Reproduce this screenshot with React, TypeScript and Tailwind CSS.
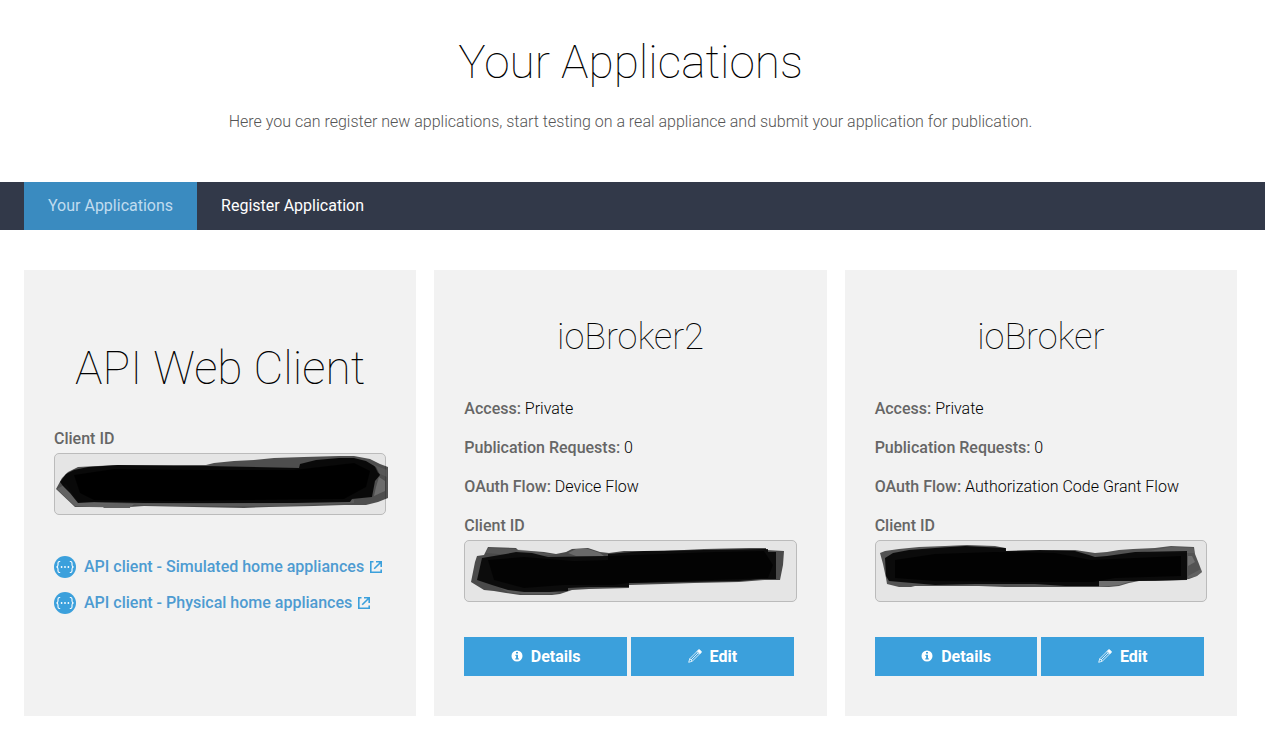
import type { ReactNode } from "react";

type Stroke = { points: string; fill: string; opacity: number };

const webClientMark: Stroke[] = [
  { points: "2,36 8,25 14,19 24,14 64,12 120,12 152,12 160,10 180,8 200,7 220,5 250,4 285,3 300,3 316,6 326,11 334,14 334,45 324,49 312,52 290,52 260,53 215,54 190,55 90,53 76,54 76,55 50,55 49,54 21,54", fill: "#000", opacity: 0.66 },
  { points: "3,36 12,31 24,49 80,51 76,55 50,55 21,53", fill: "#8a8a8a", opacity: 0.35 },
  { points: "30,50 150,51 230,50 300,47 300,50 230,53 120,53", fill: "#777", opacity: 0.3 },
  { points: "6,29 12,21 20,17 34,14 64,12 120,13 152,13 245,15 246,11 262,7 285,5 300,5 312,8 322,14 326,22 321,28 318,44 298,46 296,49 240,50 200,50 130,50 90,50 40,49 24,50 16,40 9,33", fill: "#000", opacity: 0.88 },
  { points: "20,22 60,16 150,17 240,17 300,10 316,18 312,34 290,46 120,48 40,47 26,40", fill: "#000", opacity: 0.9 },
  { points: "322,34 325,24 331,28 331,38 320,43", fill: "#8a8a8a", opacity: 0.5 },
  { points: "320,12 333,17 333,24 324,20", fill: "#666", opacity: 0.45 },
];

const deviceMark: Stroke[] = [
  { points: "7,42 11,22 13,16 20,15 24,7 52,8 54,10 80,12 92,14 102,12 108,9 124,8 136,12 145,13 160,11 200,11 240,9 285,8 302,8 302,10 320,11 319,25 316,40 300,40 275,42 230,43 200,44 165,45 165,48 125,49 108,50 96,54 88,55 56,55 42,53 30,51 20,50", fill: "#000", opacity: 0.68 },
  { points: "24,8 52,9 80,13 92,15 60,16 22,13", fill: "#777", opacity: 0.25 },
  { points: "104,13 112,9 124,9 136,13 140,16 112,16", fill: "#999", opacity: 0.4 },
  { points: "36,48 60,51 100,50 90,54 58,54 44,52", fill: "#777", opacity: 0.3 },
  { points: "13,40 18,18 36,15 52,12 68,13 84,17 144,16 144,14 180,11 240,10 304,9 304,12 312,12 312,39 297,39 275,41 220,42 165,43 165,47 125,47 104,48 104,51 86,52 60,52 44,50 28,45", fill: "#000", opacity: 0.84 },
  { points: "24,20 60,17 110,21 144,20 144,16 250,12 300,11 309,25 304,38 220,41 164,43 150,45 100,45 60,48 30,40", fill: "#000", opacity: 0.7 },
];

const brokerMark: Stroke[] = [
  { points: "5,13 10,11 24,9 44,7 70,6 92,5 120,6 130,8 131,11 180,10 200,10 220,13 232,12 244,10 258,9 280,8 296,6 319,7 320,14 324,24 327,32 322,36 314,39 306,40 280,41 264,41 254,43 244,46 234,47 224,47 130,47 104,46 40,46 36,47 24,47 12,44 11,38 8,24", fill: "#000", opacity: 0.64 },
  { points: "224,41 260,40 244,45 224,47", fill: "#999", opacity: 0.4 },
  { points: "296,7 318,8 320,13 294,13 258,14", fill: "#777", opacity: 0.3 },
  { points: "10,18 18,13 34,10 60,8 90,6 131,8 131,11 165,10 200,11 214,15 220,17 232,16 260,12 312,11 312,40 260,41 224,41 224,46 190,46 160,44 100,44 60,45 14,41 11,36", fill: "#000", opacity: 0.86 },
  { points: "20,20 60,14 120,12 180,13 216,20 260,18 306,16 306,36 240,38 218,42 150,42 60,41 20,38", fill: "#000", opacity: 0.8 },
  { points: "313,16 317,16 320,22 313,26", fill: "#888", opacity: 0.55 },
  { points: "313,36 326,29 327,32 322,36 313,38", fill: "#777", opacity: 0.4 },
];

function ClientId({ id, strokes }: { id: string; strokes: Stroke[] }) {
  return (
    <div>
      <label htmlFor={id} className="block h-6 font-medium text-[#666]">
        Client ID
      </label>
      <div className="relative mt-[2px]">
        <textarea
          id={id}
          readOnly
          className="block h-[62px] w-full resize-none rounded-[5px] border border-[#bbb] bg-[#e5e5e5] p-2"
        />
        <svg
          aria-hidden="true"
          viewBox="0 0 334 62"
          className="pointer-events-none absolute top-0 left-0 h-[62px] w-[334px]"
        >
          {strokes.map((s) => (
            <polygon key={s.points} points={s.points} fill={s.fill} opacity={s.opacity} />
          ))}
        </svg>
      </div>
    </div>
  );
}

function ApiIcon() {
  return (
    <svg aria-hidden="true" viewBox="0 0 22 22" className="h-[22px] w-[22px] shrink-0">
      <circle cx="11" cy="11" r="11" fill="#3ba0dc" />
      <g fill="none" stroke="#fff" strokeWidth="1.1">
        <path d="M6.2 5.5h-.6c-1.2 0-1.6.6-1.6 1.6v2c0 1.1-.6 1.9-1.7 1.9 1.1 0 1.7.8 1.7 1.9v2c0 1 .4 1.6 1.6 1.6h.6" />
        <path d="M15.8 5.5h.6c1.2 0 1.6.6 1.6 1.6v2c0 1.1.6 1.9 1.7 1.9-1.1 0-1.7.8-1.7 1.9v2c0 1-.4 1.6-1.6 1.6h-.6" />
      </g>
      <g fill="#fff">
        <circle cx="7.6" cy="11" r="0.9" />
        <circle cx="11" cy="11" r="0.9" />
        <circle cx="14.4" cy="11" r="0.9" />
      </g>
    </svg>
  );
}

function ExternalIcon() {
  return (
    <svg aria-hidden="true" viewBox="0 0 12 12" className="ml-[6px] h-3 w-3 shrink-0" fill="none" stroke="#3ba0dc">
      <path d="M3.5.8H.8v10.4h10.4V8.5" strokeWidth="1.6" />
      <path d="M6 .8h5.2V6M11 1 4.2 7.8" strokeWidth="1.6" />
    </svg>
  );
}

function InfoIcon() {
  return (
    <svg aria-hidden="true" viewBox="0 0 12 12" className="-mt-px h-3 w-3">
      <circle cx="6" cy="6" r="5.5" fill="#fff" />
      <path d="M5 2h2v1.6H5zM4.4 4.8H7v3.4h.8v1.2H4.3V8.2h.8V6h-.7z" fill="#3ba0dc" />
    </svg>
  );
}

function PencilIcon() {
  return (
    <svg aria-hidden="true" viewBox="0 0 14 14" className="-mt-px h-[14px] w-[14px]" fill="none" stroke="#fff" strokeWidth="0.8">
      <path d="M.7 13.3l1.1-3.6L10.3 1.2c.5-.5 1-.5 1.5 0l1 1c.5.5.5 1 0 1.5L4.3 12.2z" />
      <path d="M1.8 9.7l2.5 2.5M9 2.5 11.5 5M10 4 3 11" />
      <path d="M10.3 1.2c.5-.5 1-.5 1.5 0l1 1c.5.5.5 1 0 1.5l-.8.8-2.5-2.5z" fill="#fff" />
    </svg>
  );
}

function ApiLink({ children }: { children: ReactNode }) {
  return (
    <a href="#client" className="flex h-6 items-center font-medium text-[#4d9bd1]">
      <ApiIcon />
      <span className="ml-2">{children}</span>
      <ExternalIcon />
    </a>
  );
}

function Action({ icon, children }: { icon: ReactNode; children: ReactNode }) {
  return (
    <button
      type="button"
      className="flex h-[39px] flex-1 items-center justify-center gap-2 bg-[#3ba0dc] font-bold text-white"
    >
      {icon}
      {children}
    </button>
  );
}

function Fact({ name, value }: { name: string; value: string }) {
  return (
    <p>
      <strong className="font-medium text-[#666]">{name}:</strong> {value}
    </p>
  );
}

function AppCard({ name, flow, strokes }: { name: string; flow: string; strokes: Stroke[] }) {
  return (
    <section className="bg-[#f2f2f2] px-[30px] pt-10 pb-10">
      <h2 className="text-center text-4xl leading-[54px] font-thin">{name}</h2>
      <div className="mt-[33px] flex flex-col gap-[15px]">
        <Fact name="Access" value="Private" />
        <Fact name="Publication Requests" value="0" />
        <Fact name="OAuth Flow" value={flow} />
        <ClientId id={"client-" + name} strokes={strokes} />
      </div>
      <div className="mt-[35px] flex gap-1 pr-[3px]">
        <Action icon={<InfoIcon />}>Details</Action>
        <Action icon={<PencilIcon />}>Edit</Action>
      </div>
    </section>
  );
}

export default function App() {
  return (
    <div className="bg-white font-[Roboto,sans-serif] text-base leading-6 font-light text-black">
      <header className="pt-8 pr-7 pb-12 pl-6 text-center">
        <h1 className="text-[46px] leading-[60px] font-thin">Your Applications</h1>
        <p className="mt-[18px] text-[#555]">
          Here you can register new applications, start testing on a real appliance and submit your application for
          publication.
        </p>
      </header>
      <nav className="flex h-12 bg-[#323949] pl-6 font-normal text-white">
        <a href="#applications" aria-current="page" className="flex items-center bg-[#3a8bc0] px-6 text-[#c0dcef]">
          Your Applications
        </a>
        <a href="#register" className="flex items-center px-6">
          Register Application
        </a>
      </nav>
      <main className="grid grid-cols-3 gap-[18px] pt-10 pr-7 pb-9 pl-6">
        <section className="bg-[#f2f2f2] px-[30px] pt-[68px]">
          <h2 className="text-center text-[46px] leading-[60px] font-thin">API Web Client</h2>
          <div className="mt-[29px]">
            <ClientId id="client-web" strokes={webClientMark} />
          </div>
          <div className="mt-10 flex flex-col gap-3">
            <ApiLink>API client - Simulated home appliances</ApiLink>
            <ApiLink>API client - Physical home appliances</ApiLink>
          </div>
        </section>
        <AppCard name="ioBroker2" flow="Device Flow" strokes={deviceMark} />
        <AppCard name="ioBroker" flow="Authorization Code Grant Flow" strokes={brokerMark} />
      </main>
    </div>
  );
}
